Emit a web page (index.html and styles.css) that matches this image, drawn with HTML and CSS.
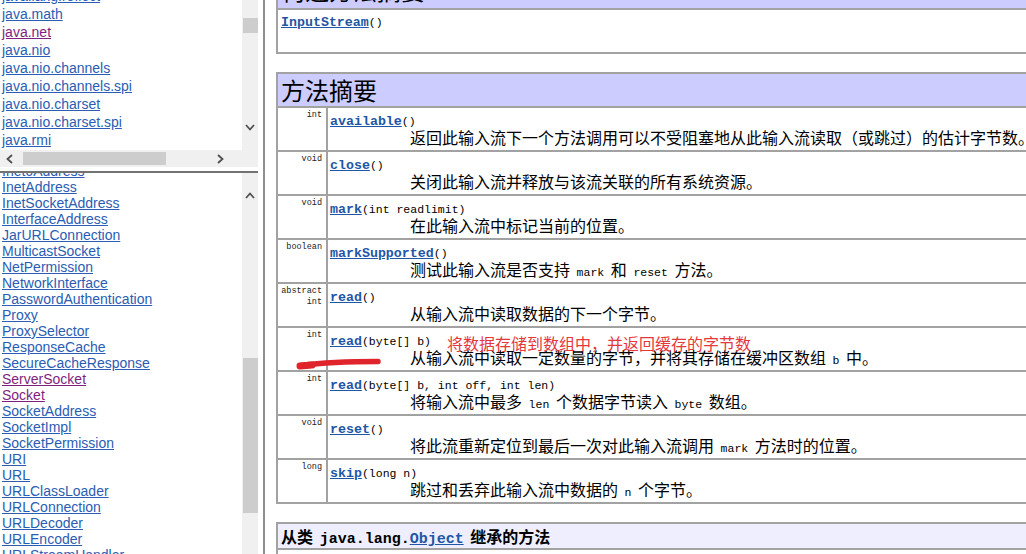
FILE: index.html
```html
<!DOCTYPE html>
<html lang="zh-CN">
<head>
<meta charset="utf-8">
<title>InputStream</title>
<link rel="stylesheet" href="styles.css">
</head>
<body>
<div class="page">
  <div class="nav">
    <div class="frame frame-top">
      <div class="viewport">
        <ul class="list list-pkg">
          <li><a href="#">java.lang.reflect</a></li>
          <li><a href="#">java.math</a></li>
          <li><a href="#" class="visited">java.net</a></li>
          <li><a href="#">java.nio</a></li>
          <li><a href="#">java.nio.channels</a></li>
          <li><a href="#">java.nio.channels.spi</a></li>
          <li><a href="#">java.nio.charset</a></li>
          <li><a href="#">java.nio.charset.spi</a></li>
          <li><a href="#">java.rmi</a></li>
          <li><a href="#">java.rmi.activation</a></li>
        </ul>
      </div>
      <div class="vscroll vs-top">
        <div class="thumb-v thumb-top"></div>
        <svg class="chev chev-down" width="10" height="7" viewBox="0 0 10 7"><polyline points="1,1 5,5.5 9,1"/></svg>
      </div>
      <div class="hscroll">
        <svg class="chev chev-left" width="7" height="10" viewBox="0 0 7 10"><polyline points="6,1 1.5,5 6,9"/></svg>
        <div class="thumb-h"></div>
        <svg class="chev chev-right" width="7" height="10" viewBox="0 0 7 10"><polyline points="1,1 5.5,5 1,9"/></svg>
      </div>
      <div class="corner"></div>
    </div>
    <div class="divider"></div>
    <div class="frame frame-bottom">
      <div class="viewport">
        <ul class="list list-cls">
          <li><a href="#">Inet6Address</a></li>
          <li><a href="#">InetAddress</a></li>
          <li><a href="#">InetSocketAddress</a></li>
          <li><a href="#">InterfaceAddress</a></li>
          <li><a href="#">JarURLConnection</a></li>
          <li><a href="#">MulticastSocket</a></li>
          <li><a href="#">NetPermission</a></li>
          <li><a href="#">NetworkInterface</a></li>
          <li><a href="#">PasswordAuthentication</a></li>
          <li><a href="#">Proxy</a></li>
          <li><a href="#">ProxySelector</a></li>
          <li><a href="#">ResponseCache</a></li>
          <li><a href="#">SecureCacheResponse</a></li>
          <li><a href="#" class="visited">ServerSocket</a></li>
          <li><a href="#" class="visited">Socket</a></li>
          <li><a href="#">SocketAddress</a></li>
          <li><a href="#">SocketImpl</a></li>
          <li><a href="#">SocketPermission</a></li>
          <li><a href="#">URI</a></li>
          <li><a href="#">URL</a></li>
          <li><a href="#">URLClassLoader</a></li>
          <li><a href="#">URLConnection</a></li>
          <li><a href="#">URLDecoder</a></li>
          <li><a href="#">URLEncoder</a></li>
          <li><a href="#">URLStreamHandler</a></li>
        </ul>
      </div>
      <div class="vscroll vs-bottom">
        <svg class="chev chev-up" width="10" height="7" viewBox="0 0 10 7"><polyline points="1,6 5,1.5 9,6"/></svg>
        <div class="thumb-v thumb-bottom"></div>
      </div>
    </div>
  </div>

  <div class="main">
    <div class="tbl tbl-first">
      <div class="tbl-head">构造方法摘要</div>
      <div class="row">
        <div class="cell-full"><div class="sig"><a href="#">InputStream</a>()</div></div>
      </div>
    </div>

    <div class="tbl">
      <div class="tbl-head">方法摘要</div>
      <div class="row">
        <div class="type">int</div>
        <div class="body"><div class="sig"><a href="#">available</a>()</div><div class="desc">返回此输入流下一个方法调用可以不受阻塞地从此输入流读取（或跳过）的估计字节数。</div></div>
      </div>
      <div class="row">
        <div class="type">void</div>
        <div class="body"><div class="sig"><a href="#">close</a>()</div><div class="desc">关闭此输入流并释放与该流关联的所有系统资源。</div></div>
      </div>
      <div class="row">
        <div class="type">void</div>
        <div class="body"><div class="sig"><a href="#">mark</a>(int&nbsp;readlimit)</div><div class="desc">在此输入流中标记当前的位置。</div></div>
      </div>
      <div class="row">
        <div class="type">boolean</div>
        <div class="body"><div class="sig"><a href="#">markSupported</a>()</div><div class="desc">测试此输入流是否支持 <code>mark</code> 和 <code>reset</code> 方法。</div></div>
      </div>
      <div class="row">
        <div class="type">abstract<br>int</div>
        <div class="body"><div class="sig"><a href="#">read</a>()</div><div class="desc">从输入流中读取数据的下一个字节。</div></div>
      </div>
      <div class="row row-noted">
        <div class="type">int</div>
        <div class="body"><div class="sig"><a href="#">read</a>(byte[]&nbsp;b)</div><div class="desc">从输入流中读取一定数量的字节，并将其存储在缓冲区数组 <code>b</code> 中。</div></div>
        <div class="note">将数据存储到数组中，并返回缓存的字节数</div>
        <svg class="scribble" width="92" height="16" viewBox="0 0 92 16"><path d="M5 9.5 C 20 7.5, 50 5.5, 82 5.5"/><path class="scribble-thick" d="M4 10 L 16 9"/></svg>
      </div>
      <div class="row">
        <div class="type">int</div>
        <div class="body"><div class="sig"><a href="#">read</a>(byte[]&nbsp;b, int&nbsp;off, int&nbsp;len)</div><div class="desc">将输入流中最多 <code>len</code> 个数据字节读入 <code>byte</code> 数组。</div></div>
      </div>
      <div class="row">
        <div class="type">void</div>
        <div class="body"><div class="sig"><a href="#">reset</a>()</div><div class="desc">将此流重新定位到最后一次对此输入流调用 <code>mark</code> 方法时的位置。</div></div>
      </div>
      <div class="row">
        <div class="type">long</div>
        <div class="body"><div class="sig"><a href="#">skip</a>(long&nbsp;n)</div><div class="desc">跳过和丢弃此输入流中数据的 <code>n</code> 个字节。</div></div>
      </div>
    </div>

    <div class="tbl">
      <div class="tbl-head tbl-head-inherit">从类 <span class="mono">java.lang.<a href="#">Object</a></span> 继承的方法</div>
      <div class="row"></div>
    </div>
  </div>
</div>
</body>
</html>
```
FILE: styles.css
```css
* {
  box-sizing: border-box;
  margin: 0;
  padding: 0;
}

html, body {
  width: 1026px;
  height: 554px;
  overflow: hidden;
  background: #ffffff;
}

body {
  font-family: "Liberation Sans", Arial, sans-serif;
}

.page {
  display: flex;
  height: 554px;
}

/* ---------- left navigation frames ---------- */
.nav {
  width: 265px;
  flex: none;
  display: flex;
  flex-direction: column;
  border-right: 2px solid #8e8e8e;
}

.frame {
  width: 258px;
  display: grid;
  grid-template-columns: 242px 16px;
  background: #ffffff;
}

.frame-top {
  height: 171px;
  grid-template-rows: 150px 17px;
  align-content: start;
}

.frame-bottom {
  flex: 1;
  min-height: 0;
  grid-template-rows: 100%;
}

.divider {
  width: 258px;
  height: 2px;
  background: #727272;
  flex: none;
}

.viewport {
  overflow: hidden;
  min-height: 0;
}

.list {
  list-style: none;
  padding-left: 2px;
}

.list-pkg {
  margin-top: -13px;
}

.list-pkg li {
  height: 18px;
  line-height: 18px;
}

.list-cls {
  margin-top: -10px;
}

.list-cls li {
  height: 16px;
  line-height: 16px;
}

.list a {
  font-size: 14px;
  color: #2a5db3;
  text-decoration: underline;
  white-space: nowrap;
}

.list a.visited {
  color: #7f1f80;
}

/* scrollbars */
.vscroll {
  background: #f0f0f0;
  display: flex;
  flex-direction: column;
  align-items: center;
}

.thumb-v {
  width: 15px;
  background: #cdcdcd;
  flex: none;
}

.vs-top {
  padding-top: 18px;
}

.thumb-top {
  height: 15px;
}

.vs-top .chev-down {
  margin-top: auto;
  margin-bottom: 19px;
}

.vs-bottom {
  padding-top: 19px;
}

.thumb-bottom {
  margin-top: 159px;
  height: 155px;
}

.hscroll {
  background: #f0f0f0;
  display: flex;
  align-items: center;
  padding-left: 6px;
}

.thumb-h {
  margin-left: 10px;
  width: 143px;
  height: 13px;
  background: #cdcdcd;
}

.hscroll .chev-right {
  margin-left: auto;
  margin-right: 18px;
}

.corner {
  background: #f0f0f0;
}

.chev {
  flex: none;
  display: block;
}

.chev polyline {
  fill: none;
  stroke: #505050;
  stroke-width: 1.8;
}

/* ---------- main content ---------- */
.main {
  flex: 1;
  overflow: hidden;
  padding-left: 11px;
  font-family: "Noto Sans CJK SC", "Liberation Sans", sans-serif;
  color: #000000;
}

.tbl {
  width: 800px;
  border-left: 2px solid #a2a2a2;
  border-top: 2px solid #a2a2a2;
  margin-top: 18px;
}

.tbl-first {
  margin-top: -26px;
}

.tbl-head {
  height: 34px;
  line-height: 32px;
  background: #ccccff;
  border-bottom: 2px solid #a2a2a2;
  padding-left: 3px;
  font-size: 24px;
  white-space: nowrap;
}

.tbl-first .tbl-head {
  line-height: 27px;
}

.tbl-head-inherit {
  height: 26px;
  line-height: 24px;
  background: #eeeeff;
  font-size: 16px;
  font-weight: bold;
}

.tbl-head-inherit .mono {
  font-family: "Liberation Mono", monospace;
  font-size: 15px;
  font-weight: bold;
  margin: 0 3px;
}

.tbl-head-inherit a {
  color: #1f56a5;
  text-decoration: underline;
}

.row {
  position: relative;
  display: flex;
  height: 44px;
  border-bottom: 2px solid #a2a2a2;
}

.cell-full {
  padding: 5px 3px 0;
}

.type {
  width: 50px;
  flex: none;
  border-right: 2px solid #a2a2a2;
  text-align: right;
  padding: 2px 4px 0 0;
  font-family: "Liberation Mono", monospace;
  font-size: 8.5px;
  line-height: 11px;
  color: #222222;
}

.body {
  flex: 1;
  padding: 6px 0 0 2px;
  white-space: nowrap;
}

.sig {
  font-family: "Liberation Mono", monospace;
  font-size: 11.5px;
  line-height: 15px;
  white-space: nowrap;
}

.sig a {
  font-size: 13.3px;
  font-weight: bold;
  color: #1f56a5;
  text-decoration: underline;
}

.desc {
  padding-left: 80px;
  font-size: 16px;
  line-height: 16px;
  white-space: nowrap;
}

.desc code {
  font-family: "Liberation Mono", monospace;
  font-size: 11.5px;
  margin: 0 3px;
}

/* annotation overlay */
.note {
  position: absolute;
  left: 169px;
  top: 6px;
  font-size: 16px;
  line-height: 18px;
  color: #e5383b;
  white-space: nowrap;
  z-index: 2;
}

.scribble {
  position: absolute;
  left: 18px;
  top: 28px;
  overflow: visible;
  z-index: 2;
}

.scribble path {
  fill: none;
  stroke: #e0242b;
  stroke-width: 5.5;
  stroke-linecap: round;
}

.scribble .scribble-thick {
  stroke-width: 7;
}
```
